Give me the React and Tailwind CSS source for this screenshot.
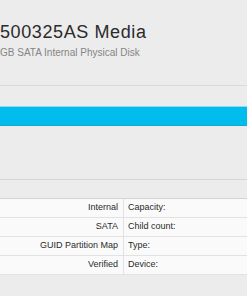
export default function App() {
  const rows = [
    ["Internal", "Capacity:"],
    ["SATA", "Child count:"],
    ["GUID Partition Map", "Type:"],
    ["Verified", "Device:"],
  ];
  return (
    <div className="w-[247px] h-[296px] overflow-hidden bg-[#ececec] flex flex-col font-['Liberation_Sans',Arial,sans-serif]">
      <div className="pt-[22px] whitespace-nowrap">
        <div className="text-[18px] leading-[21px] tracking-[0.6px] text-[#2b2b2b]">500325AS Media</div>
        <div className="mt-[4px] text-[10px] leading-[12px] text-[#858585]">GB SATA Internal Physical Disk</div>
      </div>
      <div className="mt-[26px] h-px bg-[#dadada]" />
      <div className="mt-[20px] h-[20px] flex flex-col">
        <div className="h-px bg-[#8edcf4]" />
        <div className="flex-1 bg-[#03bcee]" />
        <div className="h-px bg-[#0fa9d6]" />
      </div>
      <div className="mt-[53px] h-px bg-[#d6d6d6]" />
      <div className="mt-[18px] border-t border-[#d4d4d4] bg-[#fafafa]">
        {rows.map(([a, b], i) => (
          <div key={i} className="h-[19px] flex border-b border-[#e2e2e2] text-[9px] text-[#2a2a2a] whitespace-nowrap">
            <div className="w-[124px] pr-[5px] flex items-center justify-end border-r border-[#e2e2e2]">{a}</div>
            <div className="flex-1 pl-[4px] flex items-center">{b}</div>
          </div>
        ))}
      </div>
    </div>
  );
}
